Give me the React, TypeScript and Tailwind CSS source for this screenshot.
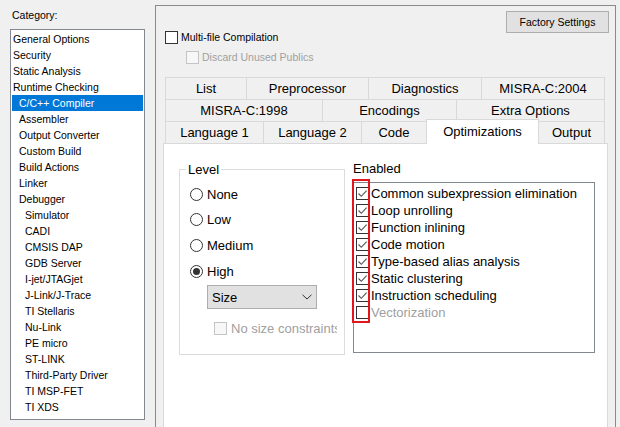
import React from "react";

const FONT = "font-['Liberation_Sans',Arial,sans-serif]";

const cats: [string, number, boolean?][] = [
  ["General Options", 0],
  ["Security", 0],
  ["Static Analysis", 0],
  ["Runtime Checking", 0],
  ["C/C++ Compiler", 1, true],
  ["Assembler", 1],
  ["Output Converter", 1],
  ["Custom Build", 1],
  ["Build Actions", 1],
  ["Linker", 1],
  ["Debugger", 1],
  ["Simulator", 2],
  ["CADI", 2],
  ["CMSIS DAP", 2],
  ["GDB Server", 2],
  ["I-jet/JTAGjet", 2],
  ["J-Link/J-Trace", 2],
  ["TI Stellaris", 2],
  ["Nu-Link", 2],
  ["PE micro", 2],
  ["ST-LINK", 2],
  ["Third-Party Driver", 2],
  ["TI MSP-FET", 2],
  ["TI XDS", 2],
];

const opts: [string, boolean][] = [
  ["Common subexpression elimination", true],
  ["Loop unrolling", true],
  ["Function inlining", true],
  ["Code motion", true],
  ["Type-based alias analysis", true],
  ["Static clustering", true],
  ["Instruction scheduling", true],
  ["Vectorization", false],
];

function Check({ checked, disabled }: { checked?: boolean; disabled?: boolean }) {
  return (
    <div
      className={
        "w-[13px] h-[13px] shrink-0 border flex items-center justify-center " +
        (disabled ? "border-[#c4c4c4] bg-[#f7f7f7]" : "border-[#333333] bg-white")
      }
    >
      {checked && (
        <svg width="11" height="11" viewBox="0 0 11 11">
          <path d="M1.5 5.5 L4.3 8.3 L9.6 2.6" fill="none" stroke="#555555" strokeWidth="1.1" />
        </svg>
      )}
    </div>
  );
}

function Radio({ checked }: { checked?: boolean }) {
  return (
    <div className="w-[13px] h-[13px] shrink-0 rounded-full border border-[#333333] bg-white flex items-center justify-center">
      {checked && <div className="w-[7px] h-[7px] rounded-full bg-[#333333]" />}
    </div>
  );
}

function Tab({ label, w, cls = "" }: { label: string; w: string; cls?: string }) {
  return (
    <div
      className={
        "h-[22px] flex items-center justify-center border-t border-[#d9d9d9] text-[13px] leading-none text-black " +
        w +
        " " +
        cls
      }
    >
      {label}
    </div>
  );
}

export default function App() {
  return (
    <div className={"w-[620px] h-[427px] overflow-hidden flex bg-[#f0f0f0] text-black " + FONT}>
      {/* left column */}
      <div className="w-[155px] shrink-0 flex flex-col">
        <div className="pt-[8px] pl-[12px] text-[10.5px] leading-[14px]">Category:</div>
        <div className="mt-[7px] ml-[10px] w-[135px] h-[391px] border border-[#828790] bg-white pt-[1px]">
          {cats.map(([name, lvl, sel]) => (
            <div
              key={name}
              className={
                "mx-[1px] h-[16px] flex items-center text-[10.5px] leading-none whitespace-nowrap " +
                (lvl === 0 ? "pl-[1px] " : lvl === 1 ? "pl-[7px] " : "pl-[13px] ") +
                (sel ? "bg-[#0078d7] text-white" : "")
              }
            >
              {name}
            </div>
          ))}
        </div>
      </div>

      {/* right panel */}
      <div className="mt-[5px] w-[461px] h-[440px] shrink-0 border border-[#8a8a8a] flex flex-col">
        <div className="h-[71px] flex justify-between items-start">
          <div className="pl-[9px] pt-[25px] flex flex-col">
            <div className="h-[13px] flex items-center gap-[3px]">
              <Check />
              <span className="text-[10.5px] leading-none whitespace-nowrap">Multi-file Compilation</span>
            </div>
            <div className="mt-[7px] pl-[21px] h-[13px] flex items-center gap-[3px]">
              <Check disabled />
              <span className="text-[10.5px] leading-none whitespace-nowrap text-[#a0a0a0]">
                Discard Unused Publics
              </span>
            </div>
          </div>
          <div className="mt-[5px] mr-[6px] w-[103px] h-[22px] border border-[#adadad] bg-[#e1e1e1] flex items-center justify-center text-[10.5px] leading-none">
            Factory Settings
          </div>
        </div>

        {/* tabs */}
        <div className="ml-[7px] w-[445px] flex flex-col">
          <div className="px-[2px] flex">
            <Tab label="List" w="w-[81px]" cls="border-l" />
            <Tab label="Preprocessor" w="w-[122px]" cls="border-l" />
            <Tab label="Diagnostics" w="w-[113px]" cls="border-l" />
            <Tab label="MISRA-C:2004" w="w-[124px]" cls="border-l border-r" />
          </div>
          <div className="px-[2px] flex">
            <Tab label="MISRA-C:1998" w="w-[157px]" cls="border-l" />
            <Tab label="Encodings" w="w-[134px]" cls="border-l" />
            <Tab label="Extra Options" w="w-[149px]" cls="border-l border-r" />
          </div>
          <div className="px-[2px] flex items-end h-[22px]">
            <Tab label="Language 1" w="w-[98px]" cls="border-l" />
            <Tab label="Language 2" w="w-[98px]" cls="border-l" />
            <Tab label="Code" w="w-[65px]" cls="border-l" />
            <div className="relative z-10 -mb-[1px] w-[113px] h-[25px] pb-[2px] bg-white border-l border-t border-r border-[#d9d9d9] flex items-center justify-center text-[13px] leading-none">
              Optimizations
            </div>
            <Tab label="Output" w="w-[66px]" cls="border-r" />
          </div>

          {/* page */}
          <div className="h-[300px] bg-white border border-[#d9d9d9] flex items-start pl-[15px]">
            {/* Level group */}
            <div className="mt-[25px] w-[166px] h-[186px] border border-[#dcdcdc] flex flex-col">
              <div className="-mt-[9px] ml-[6px] w-fit px-[2px] bg-white h-[16px] flex items-center text-[13px] leading-none">
                Level
              </div>
              <div className="mt-[4px] pl-[10px] flex flex-col">
                {[
                  ["None", false, "h-[26px]"],
                  ["Low", false, "h-[25px]"],
                  ["Medium", false, "h-[26px]"],
                  ["High", true, "h-[26px]"],
                ].map(([l, c, h]) => (
                  <div key={l as string} className={"flex items-center gap-[4px] " + h}>
                    <Radio checked={c as boolean} />
                    <span className="text-[13px] leading-none">{l as string}</span>
                  </div>
                ))}
              </div>
              <div className="mt-[1px] ml-[27px] w-[110px] h-[24px] border border-[#adadad] bg-[#e1e1e1] flex items-center justify-between pl-[4px] pr-[4px]">
                <span className="text-[13px] leading-none">Size</span>
                <svg width="10" height="6" viewBox="0 0 10 6">
                  <path d="M0.5 0.8 L5 5 L9.5 0.8" fill="none" stroke="#333333" strokeWidth="1" />
                </svg>
              </div>
              <div className="mt-[13px] ml-[34px] w-[123px] overflow-hidden h-[13px] flex items-center gap-[4px]">
                <Check disabled />
                <span className="text-[13px] leading-none whitespace-nowrap text-[#a0a0a0]">No size constraints</span>
              </div>
            </div>

            {/* Enabled */}
            <div className="ml-[8px] mt-[16px] flex flex-col">
              <div className="h-[16px] flex items-center text-[13px] leading-none">Enabled</div>
              <div className="relative mt-[6px] w-[242px] h-[171px] border border-[#828790] bg-white pt-[2px]">
                {opts.map(([l, c]) => (
                  <div key={l} className="h-[17px] pl-[2px] flex items-center gap-[2px]">
                    <Check checked={c} />
                    <span
                      className={
                        "text-[13px] leading-none whitespace-nowrap " + (c ? "text-black" : "text-[#a0a0a0]")
                      }
                    >
                      {l}
                    </span>
                  </div>
                ))}
                <div className="absolute -left-[2px] -top-[4px] w-[18px] h-[144px] border-2 border-[#e3161e]" />
              </div>
            </div>
          </div>
        </div>
      </div>
    </div>
  );
}
